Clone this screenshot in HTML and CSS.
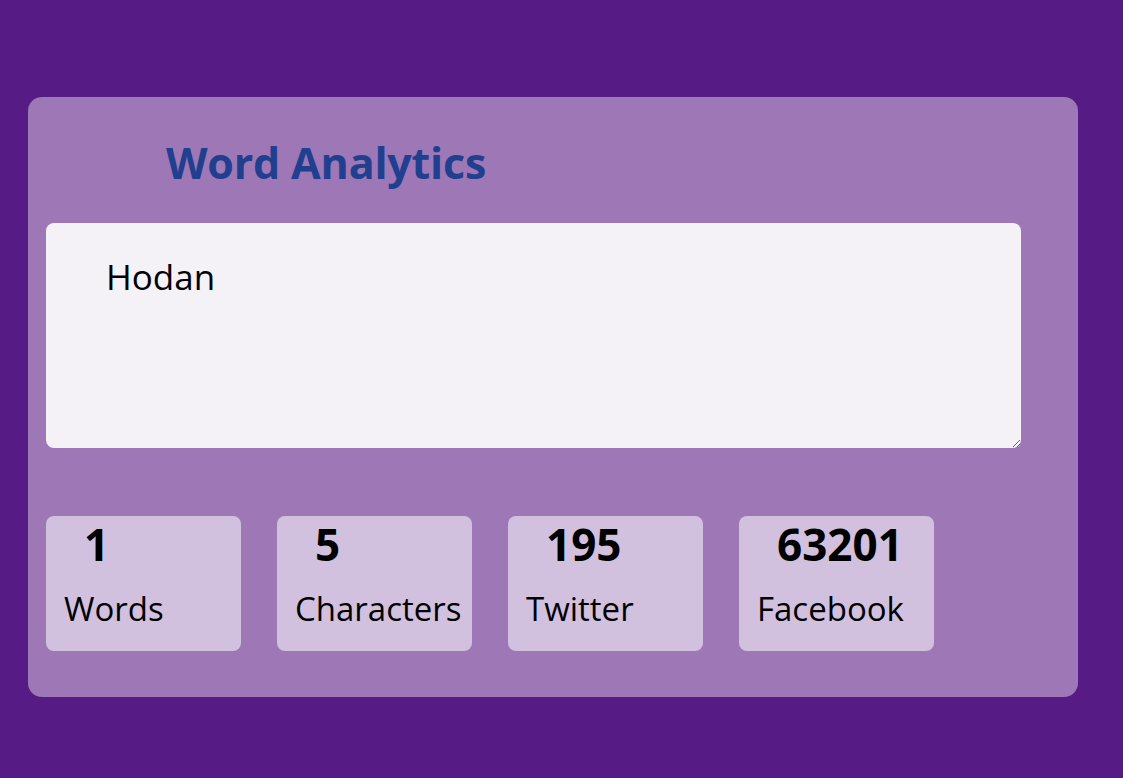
FILE: index.html
```html
<!DOCTYPE html>
<html lang="en">
<head>
<meta charset="utf-8">
<title>Word Analytics</title>
<link rel="stylesheet" href="styles.css">
</head>
<body>
  <main class="card">
    <h1 class="title">Word Analytics</h1>
    <textarea class="input" spellcheck="false">Hodan</textarea>
    <section class="stats">
      <div class="stat"><span class="stat-num">1</span><span class="stat-label">Words</span></div>
      <div class="stat"><span class="stat-num">5</span><span class="stat-label">Characters</span></div>
      <div class="stat"><span class="stat-num">195</span><span class="stat-label">Twitter</span></div>
      <div class="stat"><span class="stat-num">63201</span><span class="stat-label">Facebook</span></div>
    </section>
  </main>
</body>
</html>
```

FILE: styles.css
```css
* { box-sizing: border-box; }
html, body { margin: 0; padding: 0; }
body {
  background: #561b85;
  font-family: "Open Sans", "Noto Sans", sans-serif;
  color: #000;
  padding: 97px 0 0 28px;
  min-height: 778px;
}
.card {
  width: 1050px;
  height: 600px;
  background: #9d77b6;
  border-radius: 14px;
  padding: 0 18px;
  display: flex;
  flex-direction: column;
}
.title {
  margin: 0;
  padding: 39px 0 0 120px;
  font-size: 43px;
  line-height: 53px;
  font-weight: 700;
  color: #213f8f;
  letter-spacing: -0.2px;
}
.input {
  margin-top: 34px;
  width: 975px;
  height: 225px;
  border: none;
  outline: none;
  border-radius: 8px;
  background: #f4f2f7;
  padding: 30px 20px 0 60px;
  font-family: "Open Sans", "Noto Sans", sans-serif;
  font-size: 35px;
  color: #000;
}
.stats {
  margin-top: 68px;
  display: flex;
  gap: 36px;
}
.stat {
  width: 195px;
  height: 135px;
  background: #d2c0df;
  border-radius: 8px;
  display: flex;
  flex-direction: column;
  padding: 3px 0 0 18px;
}
.stat-num {
  font-size: 44px;
  font-weight: 700;
  line-height: 50px;
  padding-left: 20px;
}
.stat-label {
  font-size: 33px;
  line-height: 40px;
  margin-top: 20px;
}
```
